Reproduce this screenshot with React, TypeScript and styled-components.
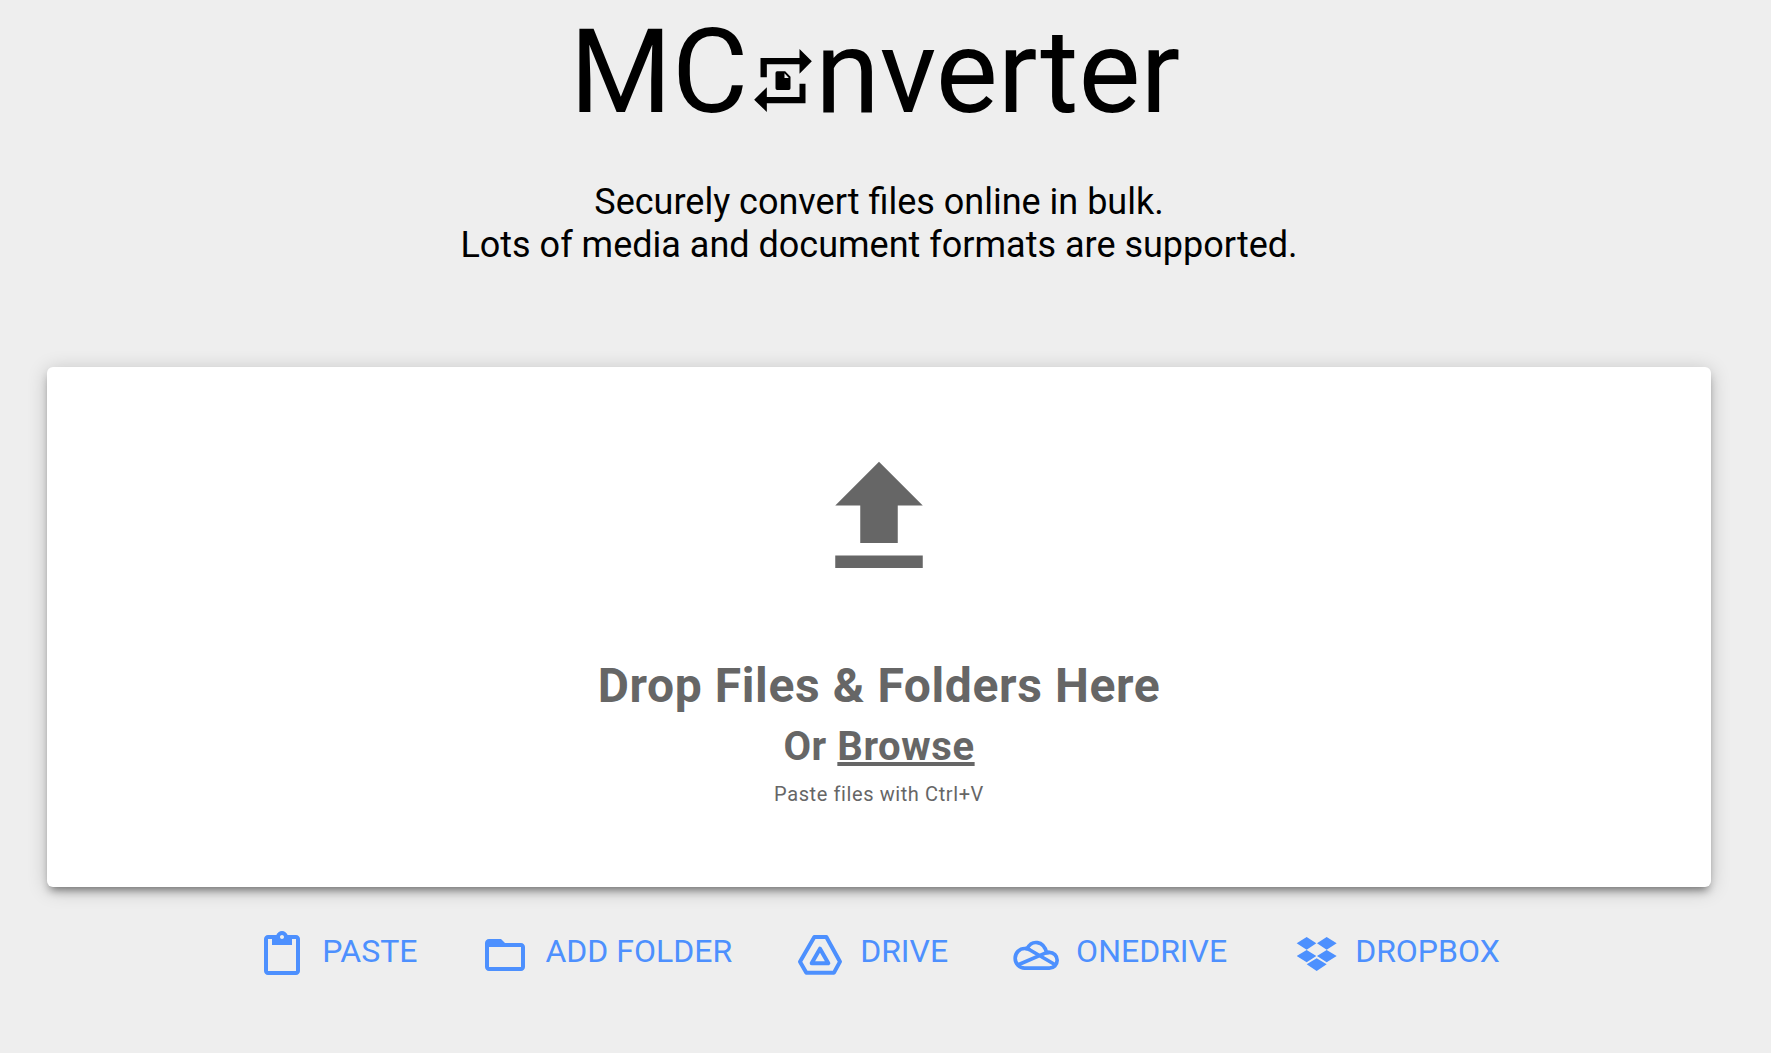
import React from "react";
import styled, { createGlobalStyle } from "styled-components";

const GlobalStyle = createGlobalStyle`
  *, *::before, *::after { box-sizing: border-box; }
  body {
    margin: 0;
    background: #eee;
    color: #000;
    font-family: Roboto, "Liberation Sans", sans-serif;
  }
`;

const Page = styled.main`
  display: flex;
  flex-direction: column;
  align-items: stretch;
  padding: 0 60px 0 47px;
`;

const Title = styled.h1`
  margin: 0;
  padding: 3px 8px 0 0;
  font-size: 117px;
  line-height: 138px;
  font-weight: 400;
  text-align: center;
  white-space: nowrap;
`;

const TitleMark = styled.svg`
  width: 58px;
  height: 63px;
  margin: 0 3px 0 6px;
`;

const Tagline = styled.p`
  margin: 40px 0 0;
  font-size: 36px;
  line-height: 43px;
  text-align: center;
`;

const DropZone = styled.section`
  display: flex;
  flex-direction: column;
  align-items: center;
  height: 520px;
  margin-top: 100px;
  padding-top: 76px;
  border-radius: 6px;
  background: #fff;
  color: #666;
  box-shadow:
    0 6px 8px -3px rgba(0, 0, 0, 0.45),
    0 3px 20px 0 rgba(0, 0, 0, 0.2);
`;

const UploadArrow = styled.svg`
  width: 150px;
  height: 150px;
  fill: currentColor;
`;

const DropHeading = styled.h2`
  margin: 65px 0 0;
  font-size: 48px;
  line-height: 56px;
  font-weight: 700;
  letter-spacing: 0.6px;
`;

const DropSubheading = styled.h3`
  margin: 5px 0 0;
  font-size: 40px;
  line-height: 56px;
  font-weight: 700;
  letter-spacing: 0.6px;
`;

const BrowseButton = styled.button`
  padding: 0;
  border: 0;
  background: none;
  color: inherit;
  font: inherit;
  letter-spacing: inherit;
  text-decoration: underline;
  cursor: pointer;
`;

const Hint = styled.p`
  margin: 7px 0 0;
  font-size: 20px;
  line-height: 24px;
  letter-spacing: 0.6px;
`;

const Sources = styled.nav`
  display: flex;
  justify-content: center;
  margin-top: 44px;
`;

const SourceButton = styled.button`
  display: flex;
  align-items: center;
  gap: 16px;
  height: 48px;
  padding: 0 32px;
  border: 0;
  background: none;
  color: #4d90fe;
  font-family: inherit;
  font-size: 32px;
  line-height: 40px;
  text-transform: uppercase;
  white-space: nowrap;
  cursor: pointer;
`;

const SourceLabel = styled.span`
  padding-bottom: 8px;
`;

const SourceIcon = styled.svg`
  flex: none;
  width: 48px;
  height: 48px;
`;

const PasteIcon = () => (
  <SourceIcon viewBox="0 0 24 24" fill="currentColor" aria-hidden="true">
    <path d="M19 2h-4.18C14.4.84 13.3 0 12 0S9.6.84 9.18 2H5c-1.1 0-2 .9-2 2v16c0 1.1.9 2 2 2h14c1.1 0 2-.9 2-2V4c0-1.1-.9-2-2-2zm-7 0c.55 0 1 .45 1 1s-.45 1-1 1-1-.45-1-1 .45-1 1-1zm7 18H5V4h2v3h10V4h2v16z" />
  </SourceIcon>
);

const FolderIcon = () => (
  <SourceIcon viewBox="0 0 24 24" fill="currentColor" aria-hidden="true">
    <path d="M20 6h-8l-2-2H4c-1.1 0-2 .9-2 2v12c0 1.1.9 2 2 2h16c1.1 0 2-.9 2-2V8c0-1.1-.9-2-2-2zm0 12H4V8h16v10z" />
  </SourceIcon>
);

const DriveIcon = () => (
  <SourceIcon
    viewBox="0 0 144 144"
    fill="none"
    stroke="currentColor"
    strokeWidth="12"
    strokeLinejoin="round"
    aria-hidden="true"
  >
    <path d="M55 18H91L132 92L114 125H31L12 92Z" />
    <path d="M72 53L97 97H47Z" />
  </SourceIcon>
);

const OneDriveIcon = () => (
  <SourceIcon
    viewBox="0 0 144 144"
    fill="none"
    stroke="currentColor"
    strokeWidth="11"
    strokeLinejoin="round"
    aria-hidden="true"
  >
    <path d="M38 111.500A28.500 29.500 0 0 1 38 52.500Q42 52.500 45 53.500C59 26 94 27 104 65Q108 64 112 64A23.500 23.750 0 0 1 112 111.500Z" />
    <path d="M40 52Q48 52 54 57L131 102M112 64Q105 64 98 67L17 102" />
  </SourceIcon>
);

const DropboxIcon = () => (
  <SourceIcon viewBox="-5 0 144 144" fill="currentColor" aria-hidden="true">
    <path d="M42 18L71 37L42 56L12 37ZM102 18L132 37L102 56L73 37ZM42 57L71 75L42 94L12 75ZM102 57L132 75L102 94L73 75ZM72 82L102 100L72 120L42 100Z" />
  </SourceIcon>
);

const sources = [
  { label: "Paste", Icon: PasteIcon },
  { label: "Add folder", Icon: FolderIcon },
  { label: "Drive", Icon: DriveIcon },
  { label: "OneDrive", Icon: OneDriveIcon },
  { label: "Dropbox", Icon: DropboxIcon },
];

export default function App() {
  return (
    <>
      <GlobalStyle />
      <Page>
        <Title>
          MC
          <TitleMark viewBox="0 0 173 189" fill="currentColor" aria-hidden="true">
            <path d="M19 27H136V0L173 37L136 74V46H38V85H19Z" />
            <path d="M154 163H38V189L0 152L38 115V144H136V104H154Z" />
            <path
              fillRule="evenodd"
              d="M69 67H93L109 83V118Q109 123 104 123H69Q64 123 64 118V72Q64 67 69 67ZM91 73V87H104Z"
            />
          </TitleMark>
          nverter
        </Title>
        <Tagline>
          Securely convert files online in bulk.
          <br />
          Lots of media and document formats are supported.
        </Tagline>
        <DropZone>
          <UploadArrow viewBox="0 0 24 24" aria-hidden="true">
            <path d="M5 20h14v-2H5v2zm0-10h4v6h6v-6h4l-7-7-7 7z" />
          </UploadArrow>
          <DropHeading>Drop Files &amp; Folders Here</DropHeading>
          <DropSubheading>
            Or <BrowseButton type="button">Browse</BrowseButton>
          </DropSubheading>
          <Hint>Paste files with Ctrl+V</Hint>
        </DropZone>
        <Sources aria-label="File sources">
          {sources.map(({ label, Icon }) => (
            <SourceButton key={label} type="button">
              <Icon />
              <SourceLabel>{label}</SourceLabel>
            </SourceButton>
          ))}
        </Sources>
      </Page>
    </>
  );
}
